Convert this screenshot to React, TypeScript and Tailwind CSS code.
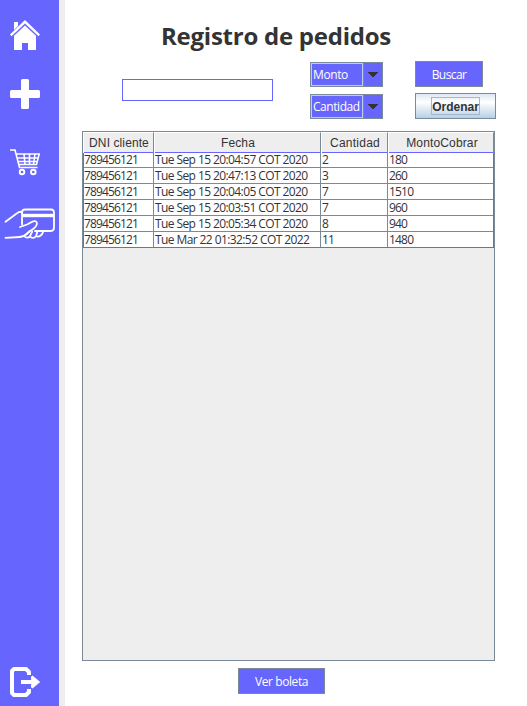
import React from "react";

const rows = [
  ["789456121", "Tue Sep 15 20:04:57 COT 2020", "2", "180"],
  ["789456121", "Tue Sep 15 20:47:13 COT 2020", "3", "260"],
  ["789456121", "Tue Sep 15 20:04:05 COT 2020", "7", "1510"],
  ["789456121", "Tue Sep 15 20:03:51 COT 2020", "7", "960"],
  ["789456121", "Tue Sep 15 20:05:34 COT 2020", "8", "940"],
  ["789456121", "Tue Mar 22 01:32:52 COT 2022", "11", "1480"],
];

const headers = [
  { label: "DNI cliente", look: "tracking-[0.1px] pl-[2px]" },
  { label: "Fecha", look: "tracking-[0.1px] pl-[2px]" },
  { label: "Cantidad", look: "tracking-[0.25px] pl-[2px]" },
  { label: "MontoCobrar", look: "tracking-[0.15px] pl-[3px]" },
];

function Sidebar() {
  return (
    <nav className="flex h-full w-[65px] shrink-0 flex-col border-r-[6px] border-[#eeeeee] bg-[#6666ff] text-white">
      <svg className="mt-5 ml-[10px] h-[30px] w-[30px] shrink-0" viewBox="0 0 30 30" fill="currentColor">
        <path d="M4 2h4v4l-4 4z" />
        <path d="M0 14.5 15 0l15 14.5-1.5 1.8L15 3.5 1.5 16.3z" />
        <path d="M4 15.8 15 5.4l11 10.4V30h-8v-7h-6v7H4z" />
      </svg>
      <svg className="mt-[29px] ml-[10px] h-[30px] w-[30px] shrink-0" viewBox="0 0 30 30" fill="currentColor">
        <rect x="11" y="0" width="8" height="30" rx="1.5" />
        <rect x="0" y="11" width="30" height="8" rx="1.5" />
      </svg>
      <svg className="mt-10 ml-[10px] h-[27px] w-[30px] shrink-0" viewBox="0 0 30 27" fill="none" stroke="currentColor" strokeWidth="1.6">
        <path d="M0 1h5l4.5 17.5H27.5M6.5 5h22.7L26.5 15.5H8.5M7.3 9h21M8 12.5h19.5M14 5l1 10.5M19.5 5v10.5M25 5l-1.5 10.5" />
        <circle cx="12" cy="23" r="2.3" strokeWidth="1.9" />
        <circle cx="23.3" cy="23" r="2.3" strokeWidth="1.9" />
      </svg>
      <svg className="mt-[31px] ml-[4px] h-[32px] w-[52px] shrink-0" viewBox="0 0 52 32" fill="none" stroke="currentColor" strokeWidth="1.8" strokeLinecap="round" strokeLinejoin="round">
        <path d="M18 17.5V5.5c0-2 1-3 3-3H47c2 0 3 1 3 3V20.5c0 2.3-1 3.5-3 3.5H31" />
        <path d="M18 8.5h32" strokeWidth="3.4" strokeLinecap="butt" />
        <path d="M1.5 14.8 13 6.3c1.3-1.2 2.5-1.7 4.5-1.5M1.5 30.8l14-.8c3 0 5-1.2 7-3.2l7-5c3.5-2.8 4.5-6 2.5-7.3-2.5-1.5-6 1.6-9 3l-7 2.5" />
        <path d="M20 29c2.3 2.4 5.2 2.2 6.2-.4l2-4M26.2 29.5c1.5 2.3 5 1.6 6-1l1.2-4M32.2 29.2c2.7 1.2 6-.7 7-4.7M22.5 27.5l3-3.5" />
      </svg>
      <svg className="mt-auto mb-[9px] ml-[10px] h-[30px] w-[31px] shrink-0" viewBox="0 0 31 30" fill="none" stroke="currentColor" strokeWidth="4" strokeLinejoin="round">
        <path d="M19 8V5l-3-3H4L2 4v22l2 2h12l3-3v-3" />
        <path d="M11 15h14" />
        <path d="M22.5 8.5 30.2 15l-7.7 6.5-1.5-1.3v-2.7L23.5 15 21 12.5V9.8z" fill="currentColor" stroke="none" />
      </svg>
    </nav>
  );
}

function Combo({ value, look }: { value: string; look: string }) {
  return (
    <div className="flex h-[25px] w-[73px] border border-[#7a8a99] bg-[#6666ff]">
      <div className={`flex h-[23px] w-[52px] items-center overflow-hidden whitespace-nowrap border border-[#b8cfe5] pt-px pl-[1px] text-[12px] text-white ${look}`}>
        {value}
      </div>
      <div className="flex flex-1 items-center justify-center border-l border-[#7a8a99]">
        <svg width="10" height="5" viewBox="0 0 10 5" fill="#333333" shapeRendering="crispEdges">
          <path d="M0 0h10v1H9v1H8v1H7v1H6v1H4V4H3V3H2V2H1V1H0z" />
        </svg>
      </div>
    </div>
  );
}

export default function App() {
  return (
    <div className="flex h-[706px] w-[527px] overflow-hidden bg-white font-['Open_Sans','Noto_Sans',sans-serif]">
      <Sidebar />
      <main className="flex flex-1 flex-col">
        <h1 className="mt-[19px] ml-[96px] h-[34px] whitespace-nowrap font-['Comic_Sans_MS','Open_Sans',sans-serif] text-[24px] leading-[34px] font-bold tracking-[-0.25px] text-[#333333]">
          Registro de pedidos
        </h1>
        <div className="mt-2 ml-[57px] flex h-[58px] items-start">
          <input className="mt-[18px] h-[22px] w-[151px] border border-[#6666ff] bg-white outline-none" />
          <div className="mt-[1px] ml-[37px] flex flex-col gap-[7px]">
            <Combo value="Monto" look="tracking-[-0.4px]" />
            <Combo value="Cantidad" look="tracking-[-0.45px]" />
          </div>
          <div className="ml-8 flex flex-col gap-[6px]">
            <button className="h-[26px] w-[68px] border border-[#7a8a99] bg-[#6666ff] pt-[2px] text-[12px] tracking-[-0.6px] text-white">
              Buscar
            </button>
            <button className="flex h-[26px] w-[81px] items-center justify-center border border-[#7a8a99] bg-linear-to-b from-[#dde8f3] via-white via-35% to-[#b8cfe5] font-['Liberation_Sans',Arial,sans-serif] text-[12px] font-bold text-[#333333]">
              <span className="h-[18px] w-[49px] border border-[#a3b8cc] text-center leading-[18px]">Ordenar</span>
            </button>
          </div>
        </div>
        <section className="mt-3 ml-[17px] h-[530px] w-[413px] border border-[#7a8a99] bg-[#eeeeee]">
          <div className="grid h-[20px] grid-cols-[71px_167px_67px_106px] font-['Liberation_Sans',Arial,sans-serif] text-[12px] leading-[20px] text-[#333333]">
            {headers.map((h) => (
              <div key={h.label} className={`border-t border-r border-t-white border-r-[#7a8a99] text-center whitespace-nowrap shadow-[inset_1px_0_white] ${h.look}`}>
                {h.label}
              </div>
            ))}
          </div>
          <div className="h-[96px] w-[411px] border border-[#6666ff] bg-white">
            {rows.map((row, i) => (
              <div key={i} className={`grid grid-cols-[70px_167px_67px_105px] text-[12px] text-[#333333] ${i === 5 ? "h-[14px] leading-[15px]" : i === 0 ? "h-[15px] border-b border-[#7a8a99] leading-[13px]" : "h-[16px] border-b border-[#7a8a99] leading-[15px]"}`}>
                <div className="border-r border-[#7a8a99] tracking-[-0.85px]">{row[0]}</div>
                <div className="border-r border-[#7a8a99] pl-[1px] tracking-[-0.59px] whitespace-nowrap">{row[1]}</div>
                <div className="border-r border-[#7a8a99] pl-[1px] tracking-[-0.8px]">{row[2]}</div>
                <div className="pl-[1px] tracking-[-0.8px]">{row[3]}</div>
              </div>
            ))}
          </div>
        </section>
        <button className="mt-[7px] ml-[173px] h-[26px] w-[87px] shrink-0 border border-[#7a8a99] bg-[#6666ff] pt-[2px] text-[12px] tracking-[-0.4px] text-white">
          Ver boleta
        </button>
      </main>
    </div>
  );
}
